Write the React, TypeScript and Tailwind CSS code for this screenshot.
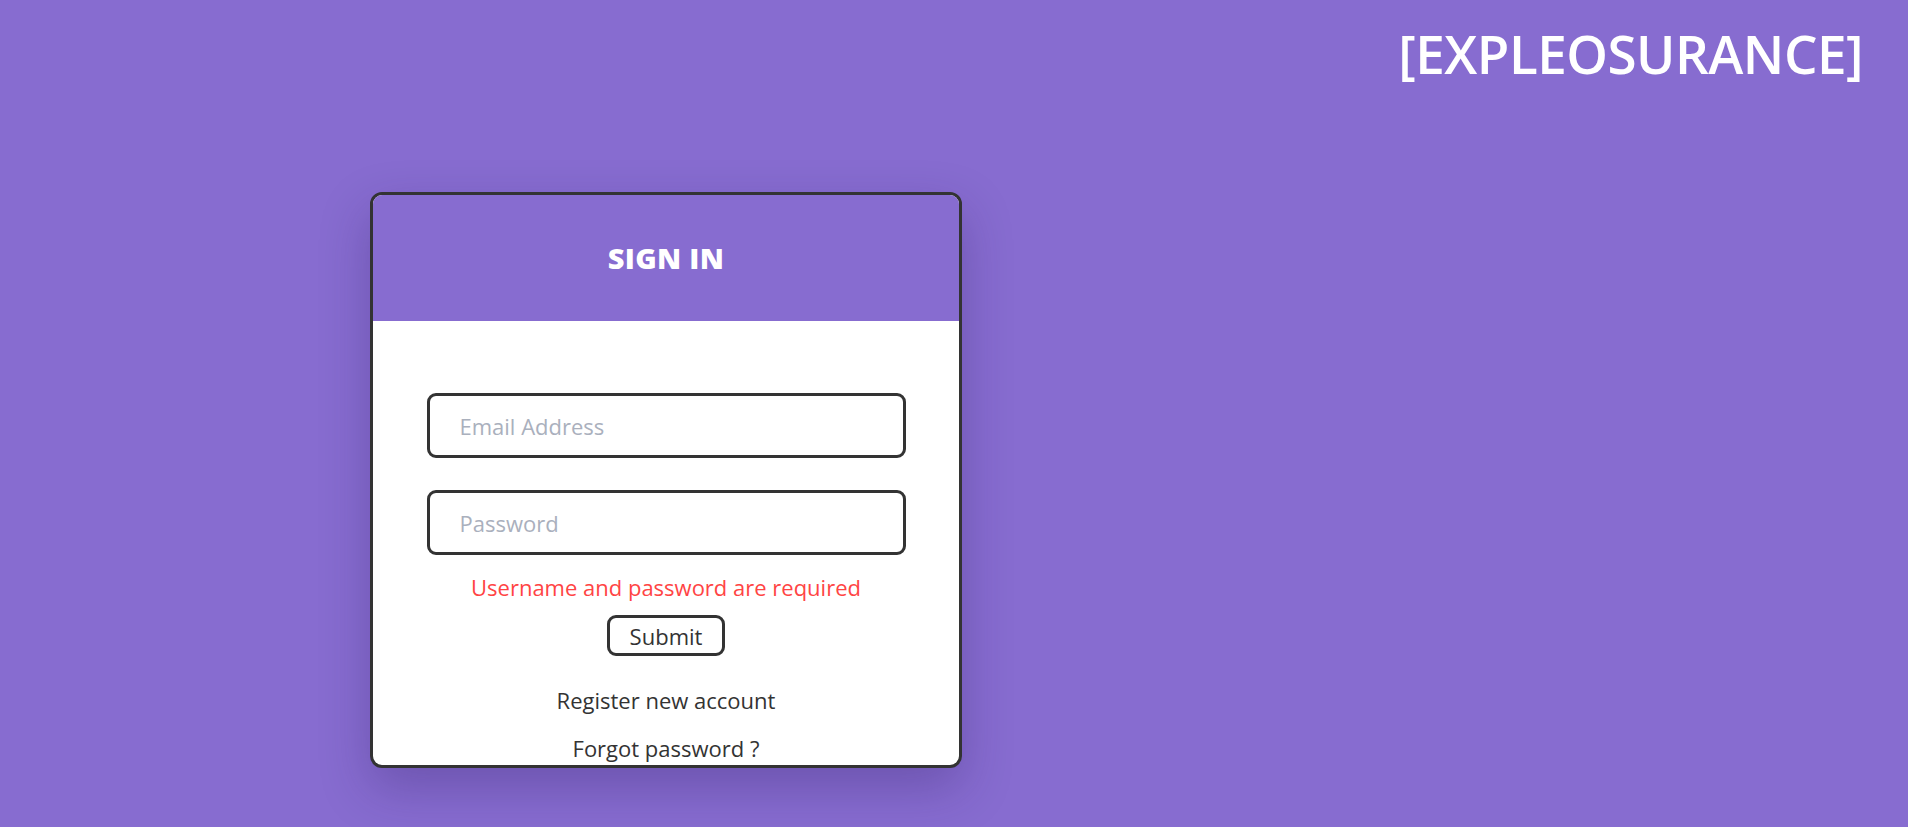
export default function App() {
  return (
    <div
      className="min-h-screen w-full bg-[#876cd0] overflow-hidden"
      style={{ fontFamily: '"Open Sans", "Noto Sans", sans-serif' }}
    >
      {/* brand */}
      <header className="flex justify-end pr-[45px] pt-[22px]">
        <h1 className="text-[53px] leading-[64px] font-semibold text-white tracking-[-0.5px]">
          [EXPLEOSURANCE]
        </h1>
      </header>

      {/* sign in card */}
      <div className="ml-[370px] mt-[106px] w-[592px] h-[576px] rounded-[12px] border-[3px] border-[#333] bg-white overflow-hidden shadow-[0_20px_50px_rgba(40,20,90,0.28)]">
        <div className="h-[126px] bg-[#876cd0] flex items-center justify-center">
          <h2 className="text-[29px] font-extrabold text-white tracking-[0.3px] uppercase">
            Sign in
          </h2>
        </div>

        <form className="flex flex-col items-center pt-[72px]">
          <input
            type="email"
            placeholder="Email Address"
            className="w-[479px] h-[65px] rounded-[9px] border-[3px] border-[#333] px-[30px] text-[22px] text-[#333] placeholder:text-[#aab0bd] outline-none"
          />
          <input
            type="password"
            placeholder="Password"
            className="mt-[32px] w-[479px] h-[65px] rounded-[9px] border-[3px] border-[#333] px-[30px] text-[22px] text-[#333] placeholder:text-[#aab0bd] outline-none"
          />
          <p className="mt-[17px] text-[22px] leading-[30px] text-[#ff4444]">
            Username and password are required
          </p>
          <button
            type="button"
            className="mt-[13px] w-[118px] h-[41px] rounded-[9px] border-[3px] border-[#333] text-[22px] leading-none text-[#333] bg-white"
          >
            Submit
          </button>
          <a className="mt-[29px] text-[22px] leading-[30px] text-[#333]">Register new account</a>
          <a className="mt-[18px] text-[22px] leading-[30px] text-[#333]">Forgot password ?</a>
        </form>
      </div>
    </div>
  );
}
